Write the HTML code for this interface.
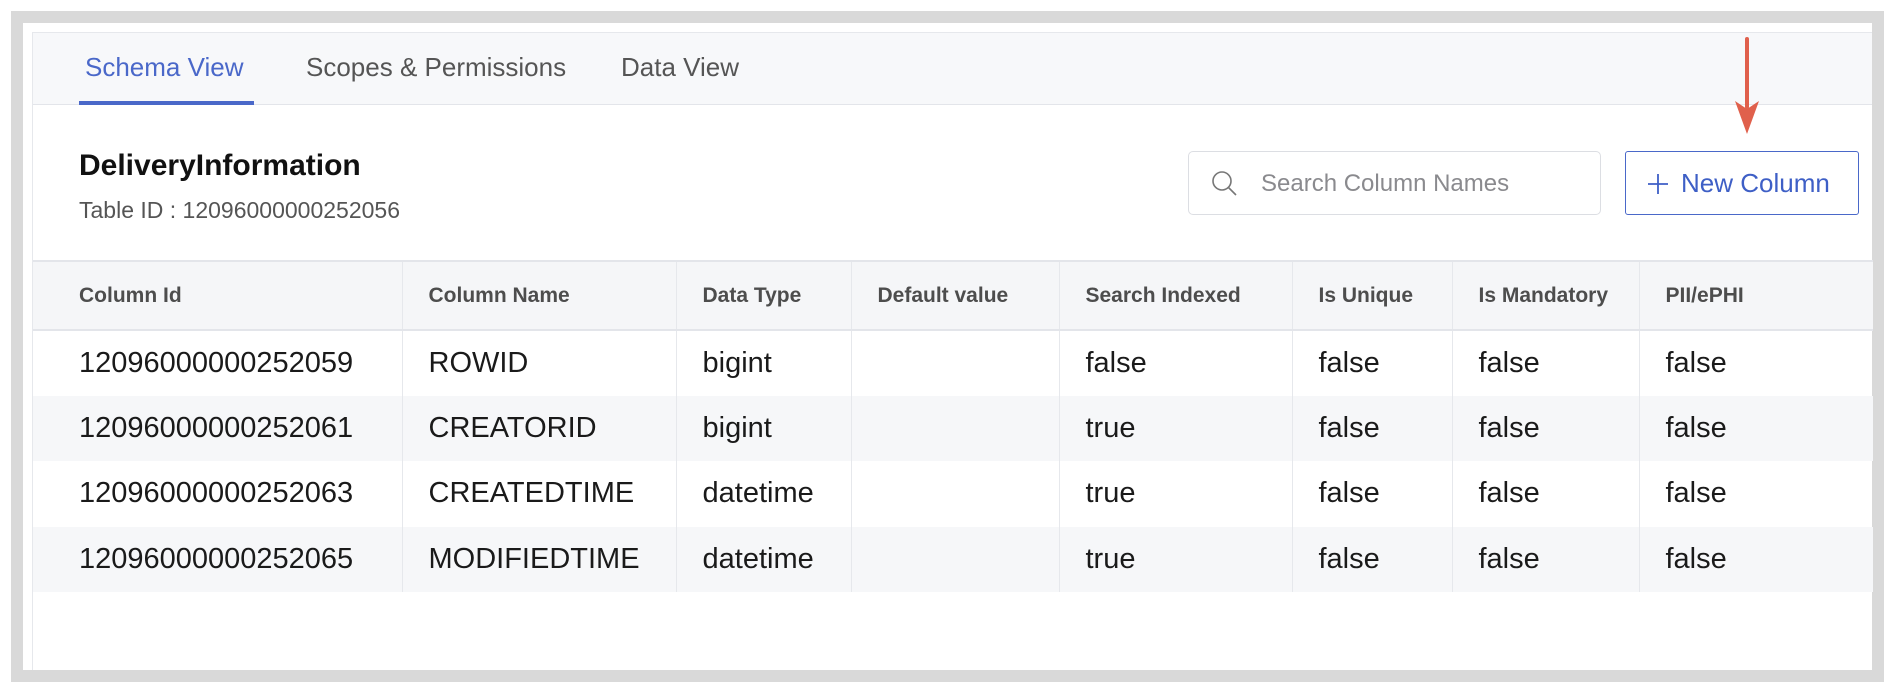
<!DOCTYPE html>
<html><head><meta charset="utf-8"><style>
*{box-sizing:border-box;margin:0;padding:0}
body{width:1896px;height:692px;background:#fff;font-family:"Liberation Sans",sans-serif;position:relative;overflow:hidden}
.frame{position:absolute;left:11px;top:11px;width:1873px;height:671px;background:#d9d9d9}
.inner{position:absolute;left:23px;top:23px;width:1849px;height:647px;background:#fff}
.panel{position:absolute;left:32px;top:32px;width:1840px;height:638px;border-left:1px solid #e6e8ec;border-top:1px solid #e6e8ec;background:#fff}
.tabs{position:absolute;left:0;top:0;width:100%;height:72px;background:#f7f8fa;border-bottom:1px solid #e3e5ea}
.tab{position:absolute;top:19px;font-size:26px;color:#555}
.ul{position:absolute;left:46px;top:68px;width:175px;height:4px;background:#4a68c9}
.a{position:absolute;white-space:nowrap}
table{position:absolute;left:0;top:227px;width:1840px;border-collapse:collapse;font-size:29px;color:#1a1a1a}
th{height:69px;background:#f5f6f8;text-align:left;font-weight:bold;font-size:21px;color:#4d4d4d;border-top:2px solid #e3e5ea;border-bottom:2px solid #e3e5ea;border-right:1px solid #e6e8ec;padding-left:26px}
td{height:65.5px;border-right:1px solid #e6e8ec;padding-left:26px}
th:first-child,td:first-child{padding-left:46px}
th:last-child,td:last-child{border-right:none}
tr.g td{background:#f6f7f9}
</style></head><body>
<div class="frame"></div><div class="inner"></div>
<div class="panel">
 <div class="tabs">
  <div class="tab" style="left:52px;color:#4a68c9">Schema View</div>
  <div class="tab" style="left:273px">Scopes &amp; Permissions</div>
  <div class="tab" style="left:588px">Data View</div>
  <div class="ul"></div>
 </div>
 <div class="a" style="left:46px;top:116px;font-size:30px;font-weight:bold;color:#111">DeliveryInformation</div>
 <div class="a" style="left:46px;top:164px;font-size:23px;color:#555">Table ID : 12096000000252056</div>
 <div style="position:absolute;left:1155px;top:118px;width:413px;height:64px;border:1px solid #dcdee3;border-radius:5px;background:#fff">
  <svg style="position:absolute;left:22px;top:18px" width="28" height="28" viewBox="0 0 28 28"><circle cx="11" cy="11" r="9" fill="none" stroke="#777" stroke-width="1.6"/><path d="M17.5 17.5 L25 25" stroke="#777" stroke-width="1.6"/></svg>
  <div class="a" style="left:72px;top:18px;font-size:24px;color:#8a8a8e">Search Column Names</div>
 </div>
 <div style="position:absolute;left:1592px;top:118px;width:234px;height:64px;border:1.5px solid #4a68c9;border-radius:3px;background:#fff">
  <svg style="position:absolute;left:22px;top:22px" width="20" height="20" viewBox="0 0 20 20"><path d="M10 0V20M0 10H20" stroke="#3e5fc6" stroke-width="1.8"/></svg>
  <div class="a" style="left:55px;top:16px;font-size:26px;color:#3e5fc6">New Column</div>
 </div>
 <svg style="position:absolute;left:1698px;top:4px" width="32" height="100" viewBox="0 0 32 100"><path d="M16 2 L16 70" stroke="#e0604c" stroke-width="4" stroke-linecap="round"/><path d="M4 64 L16 97 L28 64 L16 72 Z" fill="#e0604c"/></svg>
 <table>
  <colgroup><col style="width:369px"><col style="width:274px"><col style="width:175px"><col style="width:208px"><col style="width:233px"><col style="width:160px"><col style="width:187px"><col></colgroup>
  <tr><th>Column Id</th><th>Column Name</th><th>Data Type</th><th>Default value</th><th>Search Indexed</th><th>Is Unique</th><th>Is Mandatory</th><th>PII/ePHI</th></tr>
  <tr><td>12096000000252059</td><td>ROWID</td><td>bigint</td><td></td><td>false</td><td>false</td><td>false</td><td>false</td></tr>
  <tr class="g"><td>12096000000252061</td><td>CREATORID</td><td>bigint</td><td></td><td>true</td><td>false</td><td>false</td><td>false</td></tr>
  <tr><td>12096000000252063</td><td>CREATEDTIME</td><td>datetime</td><td></td><td>true</td><td>false</td><td>false</td><td>false</td></tr>
  <tr class="g"><td>12096000000252065</td><td>MODIFIEDTIME</td><td>datetime</td><td></td><td>true</td><td>false</td><td>false</td><td>false</td></tr>
 </table>
</div>
</body></html>
